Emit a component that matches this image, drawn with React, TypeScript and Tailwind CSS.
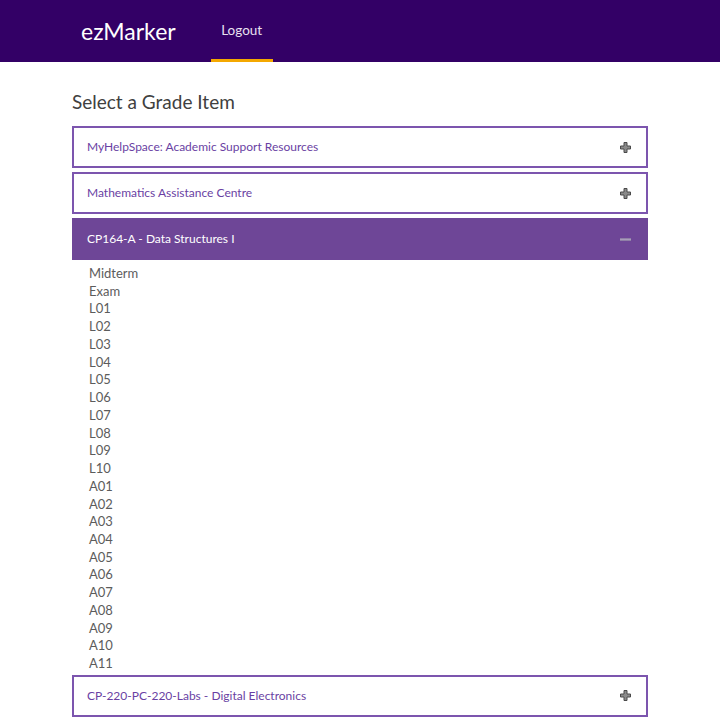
import React, { useState } from 'react';

const items = [
  'Midterm', 'Exam',
  'L01', 'L02', 'L03', 'L04', 'L05', 'L06', 'L07', 'L08', 'L09', 'L10',
  'A01', 'A02', 'A03', 'A04', 'A05', 'A06', 'A07', 'A08', 'A09', 'A10', 'A11',
];

const courses = [
  { name: 'MyHelpSpace: Academic Support Resources', items: [] as string[] },
  { name: 'Mathematics Assistance Centre', items: [] as string[] },
  { name: 'CP164-A - Data Structures I', items },
  { name: 'CP-220-PC-220-Labs - Digital Electronics', items: [] as string[] },
];

function PlusIcon() {
  return (
    <svg width="11" height="11" viewBox="0 0 11 11">
      <path
        d="M4 0.5h3v3.5h3.5v3h-3.5v3.5h-3v-3.5h-3.5v-3h3.5z"
        fill="#8a8a8a"
        stroke="#4a4a4a"
        strokeWidth="1"
      />
    </svg>
  );
}

function MinusIcon() {
  return <div className="w-[11px] h-[3px] bg-[#a99cbb] border-y border-[#8f7fa6]" />;
}

export default function App() {
  const [open, setOpen] = useState(2);

  return (
    <div className="min-h-screen bg-white font-['Lato','Open_Sans',sans-serif]">
      {/* Header */}
      <header className="h-[62px] bg-[#330066] flex items-stretch">
        <div className="w-[576px] mx-auto flex items-stretch">
          <div className="flex items-center pl-[9px] pr-[35px] text-[23px] text-white">
            ezMarker
          </div>
          <div className="flex flex-col w-[62px]">
            <div className="flex-1 flex items-center justify-center pt-[2px] text-[13.5px] text-[#e8e0f0]">
              Logout
            </div>
            <div className="h-[3px] bg-[#f4a800]" />
          </div>
        </div>
      </header>

      {/* Content */}
      <main className="w-[576px] mx-auto">
        <h1 className="pt-[28px] pb-[12px] text-[19px] leading-[24px] text-[#404040]">
          Select a Grade Item
        </h1>
        <div className="flex flex-col gap-[4px]">
          {courses.map((c, i) => {
            const isOpen = open === i;
            return (
              <div key={c.name}>
                <button
                  onClick={() => setOpen(isOpen ? -1 : i)}
                  className={`w-full h-[42px] flex items-center justify-between pl-[13px] pr-[15px] border-2 text-left text-[12px] ${
                    isOpen
                      ? 'bg-[#6e4697] border-[#6e4697] text-white'
                      : 'bg-white border-[#7c55ae] text-[#6a3fa3]'
                  }`}
                >
                  <span>{c.name}</span>
                  {isOpen ? <MinusIcon /> : <PlusIcon />}
                </button>
                {isOpen && (
                  <ul className="pl-[17px] pt-[5px] -mb-[2px] text-[13px] leading-[17.73px] text-[#5c5c5c]">
                    {c.items.map((it) => (
                      <li key={it}>{it}</li>
                    ))}
                  </ul>
                )}
              </div>
            );
          })}
        </div>
      </main>
    </div>
  );
}
